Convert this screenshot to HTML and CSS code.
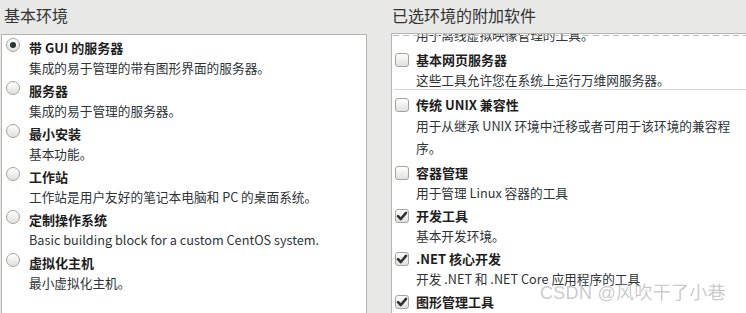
FILE: index.html
```html
<!DOCTYPE html>
<html lang="zh-CN">
<head>
<meta charset="utf-8">
<link rel="stylesheet" href="styles.css">
</head>
<body>
<div class="page">
  <section class="col col-left">
    <h2 class="heading">基本环境</h2>
    <div class="box">
      <div class="item">
        <span class="radio checked"></span>
        <div class="text">
          <div class="title">带 GUI 的服务器</div>
          <div class="desc">集成的易于管理的带有图形界面的服务器。</div>
        </div>
      </div>
      <div class="item">
        <span class="radio"></span>
        <div class="text">
          <div class="title">服务器</div>
          <div class="desc">集成的易于管理的服务器。</div>
        </div>
      </div>
      <div class="item">
        <span class="radio"></span>
        <div class="text">
          <div class="title">最小安装</div>
          <div class="desc">基本功能。</div>
        </div>
      </div>
      <div class="item">
        <span class="radio"></span>
        <div class="text">
          <div class="title">工作站</div>
          <div class="desc">工作站是用户友好的笔记本电脑和 PC 的桌面系统。</div>
        </div>
      </div>
      <div class="item">
        <span class="radio"></span>
        <div class="text">
          <div class="title">定制操作系统</div>
          <div class="desc">Basic building block for a custom CentOS system.</div>
        </div>
      </div>
      <div class="item">
        <span class="radio"></span>
        <div class="text">
          <div class="title">虚拟化主机</div>
          <div class="desc">最小虚拟化主机。</div>
        </div>
      </div>
    </div>
  </section>
  <section class="col col-right">
    <h2 class="heading">已选环境的附加软件</h2>
    <div class="box box-right">
      <div class="scroll">
        <div class="cut">用于离线虚拟映像管理的工具。</div>
        <div class="item">
          <span class="check"></span>
          <div class="text">
            <div class="title">基本网页服务器</div>
            <div class="desc">这些工具允许您在系统上运行万维网服务器。</div>
          </div>
        </div>
        <div class="sep"></div>
        <div class="item">
          <span class="check"></span>
          <div class="text">
            <div class="title">传统 UNIX 兼容性</div>
            <div class="desc wrap">用于从继承 UNIX 环境中迁移或者可用于该环境的兼容程序。</div>
          </div>
        </div>
        <div class="item">
          <span class="check"></span>
          <div class="text">
            <div class="title">容器管理</div>
            <div class="desc">用于管理 Linux 容器的工具</div>
          </div>
        </div>
        <div class="item">
          <span class="check checked"><svg viewBox="0 0 14 14" width="14" height="14"><path d="M3 7.2 L5.8 10 L11 3.8" fill="none" stroke="#2e3436" stroke-width="2.6" stroke-linecap="round" stroke-linejoin="round"/></svg></span>
          <div class="text">
            <div class="title">开发工具</div>
            <div class="desc">基本开发环境。</div>
          </div>
        </div>
        <div class="item">
          <span class="check checked"><svg viewBox="0 0 14 14" width="14" height="14"><path d="M3 7.2 L5.8 10 L11 3.8" fill="none" stroke="#2e3436" stroke-width="2.6" stroke-linecap="round" stroke-linejoin="round"/></svg></span>
          <div class="text">
            <div class="title">.NET 核心开发</div>
            <div class="desc">开发 .NET 和 .NET Core 应用程序的工具</div>
          </div>
        </div>
        <div class="item">
          <span class="check checked"><svg viewBox="0 0 14 14" width="14" height="14"><path d="M3 7.2 L5.8 10 L11 3.8" fill="none" stroke="#2e3436" stroke-width="2.6" stroke-linecap="round" stroke-linejoin="round"/></svg></span>
          <div class="text">
            <div class="title">图形管理工具</div>
            <div class="desc">用于管理系统的图形工具。</div>
          </div>
        </div>
      </div>
    </div>
  </section>
  <div class="watermark">CSDN @风吹干了小巷</div>
</div>
</body>
</html>
```
FILE: styles.css
```css
html, body {
  margin: 0;
  padding: 0;
  width: 746px;
  height: 313px;
  overflow: hidden;
  background: #e8e8e7;
  font-family: "Noto Sans CJK SC", "Noto Sans", sans-serif;
  color: #2e3436;
}
.page {
  position: relative;
  display: flex;
  height: 313px;
  padding-left: 1px;
  gap: 24px;
}
.col {
  display: flex;
  flex-direction: column;
}
.col-left {
  width: 366px;
}
.col-right {
  flex: 1;
  min-width: 0;
}
.heading {
  margin: 0;
  height: 34px;
  padding: 4px 0 0 3px;
  box-sizing: border-box;
  font-size: 16px;
  line-height: 22px;
  font-weight: normal;
  color: #333;
}
.col-right .heading {
  height: 33px;
  padding-left: 1px;
}
.box {
  flex: 1;
  background: #fff;
  border: 1px solid #b4b4b0;
  border-bottom: none;
  padding: 3px 0 0 4px;
  overflow: hidden;
  position: relative;
}
.box-right {
  width: 380px;
  padding: 0 0 0 3px;
  border-right: none;
}
.box-right::before {
  content: "";
  position: absolute;
  left: 1px;
  right: 0;
  top: 1px;
  height: 1px;
  background: linear-gradient(to right, #bcbcbc 6px, transparent 6px) repeat-x 0 0 / 10px 1px;
  z-index: 1;
}
.scroll {
  margin-top: -9px;
}
.cut {
  height: 19px;
  font-size: 12.7px;
  line-height: 19px;
  padding-left: 21px;
  overflow: hidden;
  color: #2e3436;
}
.item {
  display: flex;
  align-items: flex-start;
  gap: 9px;
  margin-bottom: 4px;
}
.box-right .item {
  gap: 7px;
}
.cut + .item {
  margin-top: 6px;
}
.title {
  font-size: 13px;
  font-weight: bold;
  line-height: 20px;
  color: #1e1e1e;
}
.desc {
  font-size: 12.7px;
  line-height: 19px;
  color: #2e3436;
}
.wrap {
  width: 328px;
  line-height: 22px;
}
.sep {
  height: 1px;
  background: #d6d6d4;
  margin: -4px 0 5px -1px;
}
.radio {
  flex: none;
  width: 12px;
  height: 12px;
  border-radius: 50%;
  border: 1px solid #a3a39f;
  background: linear-gradient(#ffffff, #e0e0dd);
  margin-top: 0;
  position: relative;
}
.radio.checked::after {
  content: "";
  position: absolute;
  left: 3px;
  top: 3px;
  width: 6px;
  height: 6px;
  border-radius: 50%;
  background: #2e3436;
}
.check {
  flex: none;
  width: 14px;
  height: 14px;
  box-sizing: border-box;
  border-radius: 3px;
  border: 1px solid #a3a39f;
  background: linear-gradient(#ffffff, #e0e0dd);
  margin-top: 3px;
  position: relative;
}
.check svg {
  position: absolute;
  left: -1px;
  top: -1px;
}
.watermark {
  position: absolute;
  left: 540px;
  top: 282px;
  font-family: "Liberation Sans", "Noto Sans CJK SC", sans-serif;
  font-size: 18px;
  line-height: 22px;
  color: rgba(150, 150, 150, 0.5);
  letter-spacing: 0.3px;
  pointer-events: none;
}
```
